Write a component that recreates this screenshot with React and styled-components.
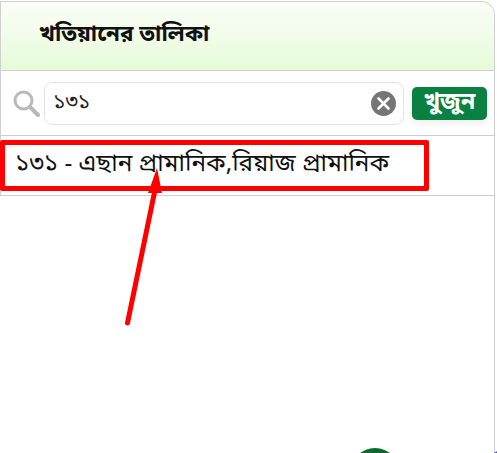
import React from "react";
import styled, { createGlobalStyle } from "styled-components";

const GlobalStyle = createGlobalStyle`
  html, body {
    margin: 0;
    padding: 0;
    background: #fff;
    overflow: hidden;
  }
  body {
    width: 497px;
    height: 453px;
    font-family: "Noto Sans Bengali", "Noto Sans", "Liberation Sans", sans-serif;
  }
`;

const Page = styled.div`
  position: relative;
  width: 497px;
  height: 453px;
  overflow: hidden;
`;

const Panel = styled.section`
  margin-top: 1px;
  width: 495px;
  height: 452px;
  box-sizing: border-box;
  border-top: 1px solid #d0d0d0;
  border-right: 1px solid #d0d0d0;
  border-radius: 0 14px 0 0;
  overflow: hidden;
`;

const Results = styled.div`
  border-left: 1px solid #d0d0d0;
`;

const Header = styled.header`
  height: 69px;
  box-sizing: border-box;
  display: flex;
  align-items: center;
  padding: 0 0 3px 38px;
  background: linear-gradient(#fbfdf9, #e6fbd8);
  border-bottom: 1px solid #cfd2cd;
`;

const Title = styled.h1`
  margin: 0;
  font-size: 22.4px;
  font-weight: 700;
  color: #111;
`;

const SearchRow = styled.div`
  height: 65px;
  box-sizing: border-box;
  display: flex;
  align-items: center;
  padding: 0 7px 0 11px;
  border-bottom: 1px solid #cfcfcf;
`;

const SearchIcon = styled.svg`
  width: 28px;
  height: 28px;
  flex: none;
  margin-right: 4px;
`;

const InputBox = styled.div`
  flex: 1;
  height: 43px;
  box-sizing: border-box;
  display: flex;
  align-items: center;
  padding: 0 7px 0 8px;
  border: 1px solid #e3e3e3;
  border-radius: 8px;
`;

const QueryText = styled.span`
  flex: 1;
  font-size: 21px;
  color: #222;
`;

const ClearIcon = styled.svg`
  width: 25px;
  height: 25px;
  flex: none;
`;

const SearchButton = styled.button`
  width: 75px;
  height: 33px;
  margin-left: 8px;
  padding: 0;
  border: 0;
  border-radius: 5px;
  background: #0a8041;
  color: #fff;
  font: 700 23px "Noto Sans Bengali", "Noto Sans", sans-serif;
  line-height: 33px;
  box-shadow: 0 3px 8px rgba(0, 0, 0, 0.08);
`;

const ResultRow = styled.div`
  height: 60px;
  box-sizing: border-box;
  display: flex;
  align-items: center;
  padding: 0 0 2px 14px;
  border-bottom: 1px solid #cfcfcf;
  font-size: 24.3px;
  color: #111;
`;

const Highlight = styled.div`
  position: absolute;
  left: 0;
  top: 140px;
  width: 429px;
  height: 51px;
  box-sizing: border-box;
  border: 5px solid #ff0000;
  border-radius: 2px;
`;

const Arrow = styled.svg`
  position: absolute;
  left: 0;
  top: 0;
  width: 497px;
  height: 453px;
  pointer-events: none;
`;

const Fab = styled.div`
  position: absolute;
  left: 350px;
  top: 448px;
  width: 50px;
  height: 50px;
  border-radius: 50%;
  background: #0b6b2e;
`;

const CornerDot = styled.div`
  position: absolute;
  left: 488px;
  top: 450px;
  width: 30px;
  height: 30px;
  border-radius: 50%;
  background: #4a57c4;
`;

export default function App() {
  return (
    <Page>
      <GlobalStyle />
      <Panel>
        <Results>
          <Header>
            <Title>খতিয়ানের তালিকা</Title>
          </Header>
          <SearchRow>
            <SearchIcon viewBox="0 0 28 28" fill="none" stroke="#b9b9b9">
              <circle cx="11.5" cy="11.5" r="8.5" strokeWidth="3" />
              <path d="M18 18l8 8" strokeWidth="4" strokeLinecap="round" />
            </SearchIcon>
            <InputBox>
              <QueryText>১৩১</QueryText>
              <ClearIcon viewBox="0 0 25 25">
                <circle cx="12.5" cy="12.5" r="12.5" fill="#757575" />
                <path d="M7.5 7.5l10 10M17.5 7.5l-10 10" stroke="#fff" strokeWidth="2.6" strokeLinecap="round" />
              </ClearIcon>
            </InputBox>
            <SearchButton type="button">খুজুন</SearchButton>
          </SearchRow>
          <ResultRow>১৩১ - এছান প্রামানিক,রিয়াজ প্রামানিক</ResultRow>
        </Results>
      </Panel>
      <Highlight />
      <Arrow viewBox="0 0 497 453">
        <path d="M127.500 323L155 190" stroke="#ff0000" strokeWidth="5" strokeLinecap="round" fill="none" />
        <path d="M157 168L148 193L162 193Z" fill="#ff0000" />
      </Arrow>
      <Fab />
      <CornerDot />
    </Page>
  );
}
